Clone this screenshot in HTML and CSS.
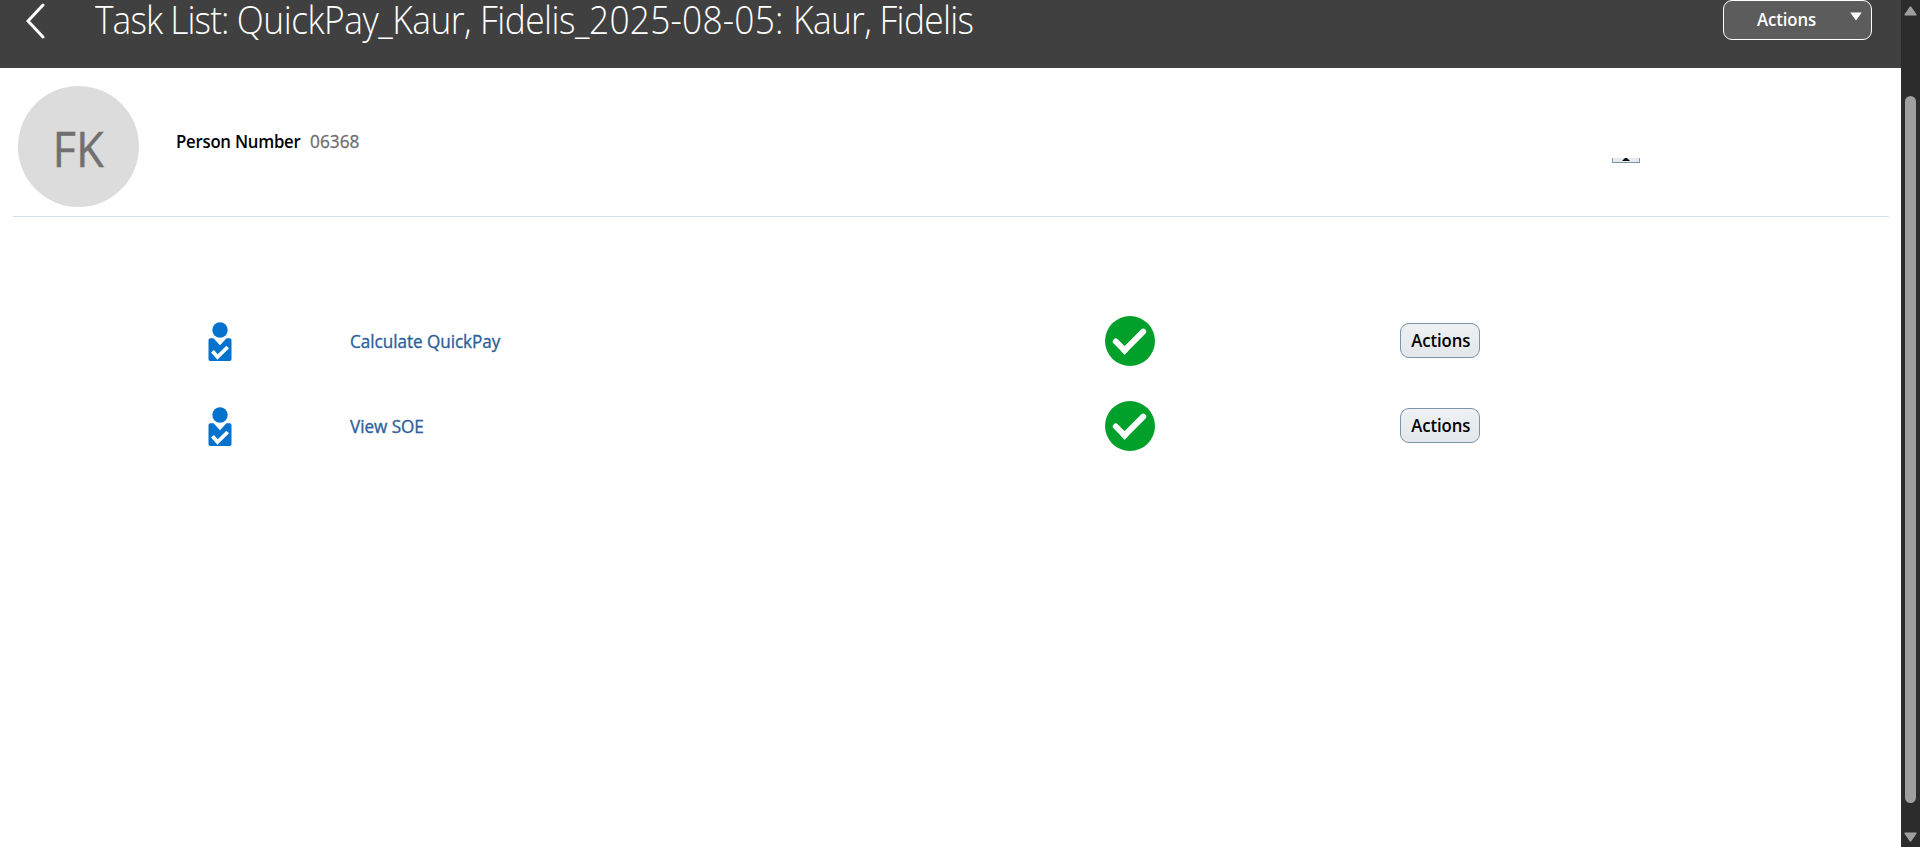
FILE: index.html
```html
<!DOCTYPE html>
<html lang="en">
<head>
<meta charset="utf-8">
<title>Task List</title>
<link rel="stylesheet" href="styles.css">
</head>
<body>
<svg class="defs" width="0" height="0">
  <symbol id="person" viewBox="0 0 24 40">
    <circle cx="12" cy="8" r="7.7" fill="#0572ce"/>
    <path d="M2.3 16.3H5.5L12 23.2L18.5 16.3H21.7Q23.5 16.3 23.5 18.2V37.2Q23.5 39 21.7 39H2.3Q.5 39 .5 37.2V18.2Q.5 16.3 2.3 16.3Z" fill="#0572ce"/>
    <path d="M4.5 29.3L9.5 35L19.7 25" fill="none" stroke="#fff" stroke-width="3.8"/>
  </symbol>
  <symbol id="done" viewBox="0 0 50 50">
    <circle cx="25" cy="25" r="25" fill="#00a02b"/>
    <path d="M10.8 25.5L19.6 34.3L38.2 15.7" fill="none" stroke="#fff" stroke-width="6" stroke-linecap="round"/>
    <path d="M15.4 34.3L19.6 38.7L23.8 34.3Z" fill="#fff"/>
  </symbol>
</svg>
<div class="window">
  <div class="page">
    <header class="header">
      <svg class="back" width="20" height="36" viewBox="0 0 20 36"><path d="M17 2L2 18L17 34" fill="none" stroke="#fff" stroke-width="3" stroke-linecap="round" stroke-linejoin="miter"/></svg>
      <h1 class="title"><span class="title-kind">Task List: </span>QuickPay_Kaur, Fidelis_<span class="title-date">2025-08-05: </span><span class="title-name">Kaur, Fidelis</span></h1>
      <button class="menu-button"><span class="menu-label">Actions</span><svg class="caret" width="12" height="9" viewBox="0 0 12 9"><path d="M.3 .5H11.7L6 8.5Z" fill="#fff"/></svg></button>
    </header>
    <section class="person">
      <div class="avatar"><span class="initials">FK</span></div>
      <div class="field"><span class="field-label">Person Number</span><span class="field-value">06368</span></div>
      <div class="collapse"><svg width="8" height="3" viewBox="0 0 8 3"><path d="M3 0H5L8 3H0Z" fill="#111"/></svg></div>
    </section>
    <main class="tasks">
      <div class="task">
        <svg class="task-icon" width="24" height="40"><use href="#person"/></svg>
        <a class="task-link">Calculate QuickPay</a>
        <svg class="status" width="50" height="50"><use href="#done"/></svg>
        <button class="task-button"><span class="button-label">Actions</span></button>
      </div>
      <div class="task">
        <svg class="task-icon" width="24" height="40"><use href="#person"/></svg>
        <a class="task-link">View SOE</a>
        <svg class="status" width="50" height="50"><use href="#done"/></svg>
        <button class="task-button"><span class="button-label">Actions</span></button>
      </div>
    </main>
  </div>
  <div class="scrollbar">
    <svg width="13" height="10" viewBox="0 0 13 10"><path d="M6.5 1L12 8.8H1Z" fill="#9f9f9f" stroke="#9f9f9f" stroke-width="1.4" stroke-linejoin="round"/></svg>
    <div class="thumb"></div>
    <svg width="13" height="10" viewBox="0 0 13 10"><path d="M6.5 9L12 1.2H1Z" fill="#9f9f9f" stroke="#9f9f9f" stroke-width="1.4" stroke-linejoin="round"/></svg>
  </div>
</div>
</body>
</html>
```
FILE: styles.css
```css
* { box-sizing: border-box; }
body { margin: 0; background: #fff; font-family: "Open Sans", "Noto Sans", sans-serif; font-size: 18px; }
.defs { display: block; }
.window { display: flex; height: 847px; }
.page { flex: 1; }
button { font-family: inherit; margin: 0; padding: 0; }
span { white-space: nowrap; }

.header { display: flex; align-items: flex-start; height: 68px; background: #404040; padding-right: 29px; }
.back { margin: 3px 0 0 26px; }
.title { margin: 0 0 0 49px; width: 960px; font-size: 38px; line-height: 39px; font-weight: 300; letter-spacing: -0.53px; color: #fff; white-space: nowrap; transform: scaleX(.93); transform-origin: left; }
.title-kind { letter-spacing: -1px; }
.title-date { letter-spacing: 0.2px; }
.title-name { letter-spacing: -0.75px; }
.menu-button { display: flex; align-items: flex-start; width: 149px; height: 40px; margin-left: auto; border: 1px solid #fff; border-radius: 9px; background: #5c5c5c; color: #fff; }
.menu-label { margin: 5px 0 0 33px; width: 93px; text-align: left; font-size: 18px; line-height: 27px; font-weight: 600; letter-spacing: -0.1px; transform: scaleX(.93); transform-origin: left; }
.caret { margin-top: 11px; }

.person { display: flex; align-items: flex-start; height: 149px; margin: 0 12px 0 13px; border-bottom: 1px solid #d6dfe6; }
.avatar { display: flex; align-items: center; justify-content: center; width: 121px; height: 121px; margin: 18px 0 0 5px; border-radius: 50%; background: #dcdcdc; }
.initials { margin-top: 2px; font-size: 50px; line-height: 60px; color: #707070; transform: scaleX(.91); -webkit-text-stroke: .4px #707070; }
.field { display: flex; gap: 10px; margin: 60px 0 0 37px; line-height: 27px; }
.field-label { width: 124px; font-weight: 600; letter-spacing: -0.25px; color: #000; transform: scaleX(.93); transform-origin: left; }
.field-value { color: #6e6e6e; transform: scaleX(.96); transform-origin: left; -webkit-text-stroke: .3px #6e6e6e; }
.collapse { display: flex; justify-content: center; width: 28px; height: 5px; margin: 90px 249px 0 auto; border: 1px solid #7b94a8; border-top: 0; background: #e6ebef; }

.tasks { padding-top: 82px; }
.task { display: grid; grid-template-columns: 142px 755px 295px 80px; align-items: center; height: 85px; padding-left: 208px; }
.task-link { color: #2c5f9b; line-height: 27px; letter-spacing: -0.03px; transform: scaleX(.95); transform-origin: left; -webkit-text-stroke: .35px #2c5f9b; }
.status { margin-bottom: 2px; }
.task-button { height: 35px; width: 80px; margin-bottom: 2px; padding-left: 1px; border: 1px solid #7b94a8; border-radius: 9px; background: linear-gradient(#eff1f3, #e2e7eb); color: #000; }
.button-label { display: inline-block; font-size: 18px; line-height: 27px; font-weight: 600; letter-spacing: -0.1px; transform: scaleX(.93); }

.scrollbar { display: flex; flex-direction: column; align-items: center; width: 19px; padding: 6px 0 5px; background: #2c2c2c; }
.thumb { width: 11px; height: 707px; margin: 80px 0 auto; border-radius: 6px; background: #9f9f9f; }
```
